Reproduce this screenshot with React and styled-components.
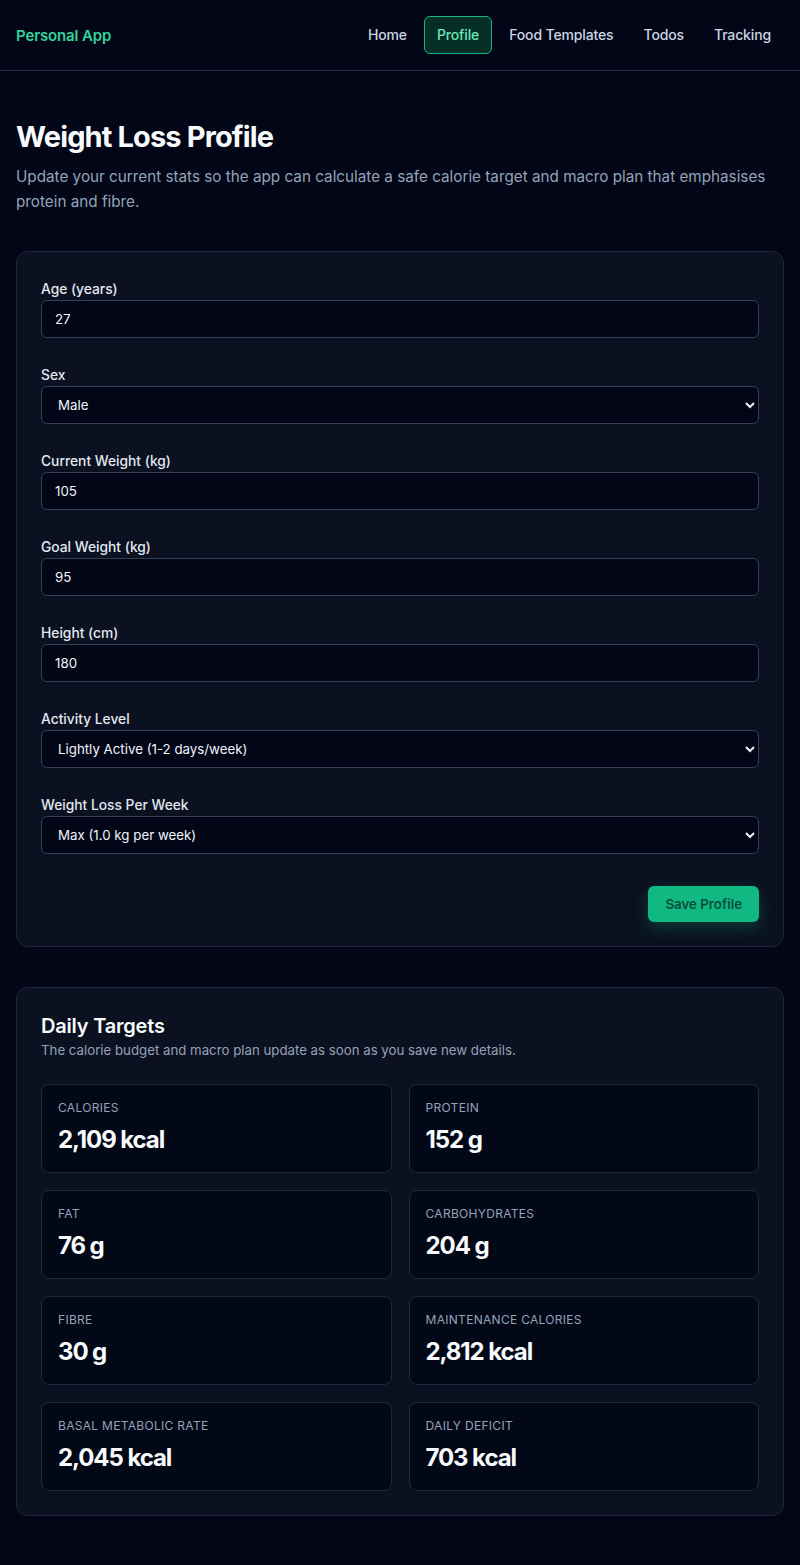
import styled, { createGlobalStyle } from "styled-components";

const GlobalStyle = createGlobalStyle`
  * { box-sizing: border-box; }
  body {
    margin: 0;
    background: #020617;
    color: #e2e8f0;
    font-family: Inter, "Noto Sans", sans-serif;
  }
`;

const Header = styled.header`
  height: 71px;
  display: flex;
  align-items: center;
  justify-content: space-between;
  padding: 0 16px;
  border-bottom: 1px solid #1e293b;
`;

const Logo = styled.div`
  color: #34d399;
  font-size: 15px;
  font-weight: 600;
  letter-spacing: -0.01em;
`;

const Nav = styled.nav`
  display: flex;
  align-items: center;
  gap: 4px;
`;

const NavLink = styled.a`
  font-size: 14px;
  font-weight: 500;
  letter-spacing: -0.01em;
  line-height: 20px;
  padding: 8px 12px;
  border-radius: 6px;
  border: 1px solid ${(p) => (p.$active ? "#10b981" : "transparent")};
  background: ${(p) => (p.$active ? "#052e26" : "transparent")};
  color: ${(p) => (p.$active ? "#6ee7b7" : "#cbd5e1")};
  cursor: pointer;
`;

const Main = styled.main`
  padding: 48px 16px 48px;
`;

const Title = styled.h1`
  margin: 0;
  font-size: 29px;
  font-weight: 700;
  letter-spacing: -0.03em;
  color: #f8fafc;
`;

const Intro = styled.p`
  margin: 10px 0 0;
  font-size: 15.25px;
  line-height: 25px;
  color: #94a3b8;
`;

const Card = styled.section`
  margin-top: ${(p) => p.$top || "40px"};
  background: #0b1120;
  border: 1px solid #1e293b;
  border-radius: 12px;
  padding: ${(p) => p.$pad || "24px"};
`;

const Form = styled.form`
  display: flex;
  flex-direction: column;
  gap: 28px;
`;

const Field = styled.label`
  display: flex;
  flex-direction: column;
  gap: 2px;
`;

const Label = styled.span`
  font-size: 13.8px;
  font-weight: 500;
  color: #e2e8f0;
  line-height: 18px;
`;

const Input = styled.input`
  height: 38px;
  width: 100%;
  padding: 0 13px;
  background: #020617;
  border: 1px solid #334155;
  border-radius: 6px;
  color: #f1f5f9;
  font-family: Inter, "Noto Sans", sans-serif;
  font-size: 13.3px;
  outline: none;
`;

const Select = styled.select`
  height: 38px;
  width: 100%;
  padding: 0 12px;
  background: #020617;
  border: 1px solid #334155;
  border-radius: 6px;
  color: #f1f5f9;
  font-family: Inter, "Noto Sans", sans-serif;
  font-size: 13.3px;
  color-scheme: dark;
  outline: none;
`;

const Actions = styled.div`
  display: flex;
  justify-content: flex-end;
  padding-top: 4px;
`;

const SaveButton = styled.button`
  height: 36px;
  padding: 0 17px;
  border: none;
  border-radius: 6px;
  background: #10b981;
  color: #064e3b;
  font-family: Inter, "Noto Sans", sans-serif;
  font-size: 13.3px;
  font-weight: 600;
  box-shadow: 0 6px 16px rgba(16, 185, 129, 0.25);
  cursor: pointer;
`;

const SectionTitle = styled.h2`
  margin: 0;
  font-size: 20px;
  line-height: 28px;
  font-weight: 600;
  letter-spacing: -0.01em;
  color: #f8fafc;
`;

const SectionNote = styled.p`
  margin: 0;
  font-size: 13.25px;
  line-height: 20px;
  color: #94a3b8;
`;

const StatGrid = styled.div`
  margin-top: 24px;
  display: grid;
  grid-template-columns: 1fr 1fr;
  gap: 17px;
`;

const Stat = styled.div`
  height: 89px;
  padding: 16px 16px;
  background: #030817;
  border: 1px solid #1e293b;
  border-radius: 8px;
`;

const StatLabel = styled.div`
  font-size: 12px;
  letter-spacing: 0.025em;
  text-transform: uppercase;
  color: #94a3b8;
  line-height: 14px;
`;

const StatValue = styled.div`
  margin-top: 10px;
  font-size: 24px;
  line-height: 30px;
  font-weight: 700;
  letter-spacing: -0.045em;
  color: #f8fafc;
`;

const stats = [
  ["Calories", "2,109 kcal"],
  ["Protein", "152 g"],
  ["Fat", "76 g"],
  ["Carbohydrates", "204 g"],
  ["Fibre", "30 g"],
  ["Maintenance Calories", "2,812 kcal"],
  ["Basal Metabolic Rate", "2,045 kcal"],
  ["Daily Deficit", "703 kcal"],
];

export default function App() {
  return (
    <>
      <GlobalStyle />
      <Header>
        <Logo>Personal App</Logo>
        <Nav>
          <NavLink>Home</NavLink>
          <NavLink $active>Profile</NavLink>
          <NavLink>Food Templates</NavLink>
          <NavLink>Todos</NavLink>
          <NavLink>Tracking</NavLink>
        </Nav>
      </Header>
      <Main>
        <Title>Weight Loss Profile</Title>
        <Intro>
          Update your current stats so the app can calculate a safe calorie target and macro plan that
          emphasises protein and fibre.
        </Intro>

        <Card $top="37px" $pad="28px 24px 24px">
          <Form onSubmit={(e) => e.preventDefault()}>
            <Field>
              <Label>Age (years)</Label>
              <Input type="number" defaultValue="27" />
            </Field>
            <Field>
              <Label>Sex</Label>
              <Select defaultValue="male">
                <option value="male">Male</option>
                <option value="female">Female</option>
              </Select>
            </Field>
            <Field>
              <Label>Current Weight (kg)</Label>
              <Input type="number" defaultValue="105" />
            </Field>
            <Field>
              <Label>Goal Weight (kg)</Label>
              <Input type="number" defaultValue="95" />
            </Field>
            <Field>
              <Label>Height (cm)</Label>
              <Input type="number" defaultValue="180" />
            </Field>
            <Field>
              <Label>Activity Level</Label>
              <Select defaultValue="light">
                <option value="sedentary">Sedentary</option>
                <option value="light">Lightly Active (1-2 days/week)</option>
                <option value="moderate">Moderately Active</option>
              </Select>
            </Field>
            <Field>
              <Label>Weight Loss Per Week</Label>
              <Select defaultValue="max">
                <option value="slow">Slow (0.25 kg per week)</option>
                <option value="max">Max (1.0 kg per week)</option>
              </Select>
            </Field>
            <Actions>
              <SaveButton type="submit">Save Profile</SaveButton>
            </Actions>
          </Form>
        </Card>

        <Card $top="40px">
          <SectionTitle>Daily Targets</SectionTitle>
          <SectionNote>The calorie budget and macro plan update as soon as you save new details.</SectionNote>
          <StatGrid>
            {stats.map(([label, value]) => (
              <Stat key={label}>
                <StatLabel>{label}</StatLabel>
                <StatValue>{value}</StatValue>
              </Stat>
            ))}
          </StatGrid>
        </Card>
      </Main>
    </>
  );
}
